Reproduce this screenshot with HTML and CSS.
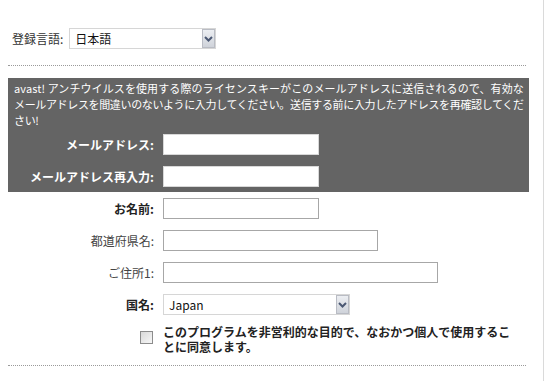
FILE: index.html
```html
<!DOCTYPE html>
<html lang="ja">
<head>
<meta charset="utf-8">
<title>登録</title>
<link rel="stylesheet" href="styles.css">
</head>
<body>
<div class="page">
  <div class="lang-row">
    <label class="lang-label">登録言語:</label>
    <div class="select-wrap lang-select">
      <select class="select"><option>日本語</option></select>
      <span class="select-btn"><svg width="9" height="6" viewBox="0 0 9 6"><polyline points="1,1 4.5,4.5 8,1" fill="none" stroke="#4b5873" stroke-width="2"/></svg></span>
    </div>
  </div>
  <div class="divider"></div>
  <div class="notice">
    <p class="notice-text"><span class="line-wide">avast! アンチウイルスを使用する際のライセンスキーがこのメールアドレスに送信されるので、有効な</span><br>メールアドレスを間違いのないように入力してください。送信する前に入力したアドレスを再確認してくだ<br>さい!</p>
    <div class="form-grid">
      <label class="label strong">メールアドレス:</label>
      <input class="field field-notice w-short" type="text">
      <label class="label strong">メールアドレス再入力:</label>
      <input class="field field-notice w-short" type="text">
    </div>
  </div>
  <div class="form-grid plain">
    <label class="label strong">お名前:</label>
    <input class="field w-short" type="text">
    <label class="label">都道府県名:</label>
    <input class="field w-mid" type="text">
    <label class="label">ご住所1:</label>
    <input class="field w-long" type="text">
    <label class="label strong">国名:</label>
    <div class="select-wrap country-select">
      <select class="select"><option>Japan</option></select>
      <span class="select-btn"><svg width="9" height="6" viewBox="0 0 9 6"><polyline points="1,1 4.5,4.5 8,1" fill="none" stroke="#4b5873" stroke-width="2"/></svg></span>
    </div>
  </div>
  <div class="agree">
    <span class="checkbox"></span>
    <span class="agree-text">このプログラムを非営利的な目的で、なおかつ個人で使用することに同意します。</span>
  </div>
  <div class="divider bottom"></div>
</div>
</body>
</html>
```
FILE: styles.css
```css
html, body {
  margin: 0;
  padding: 0;
  background: #fff;
}
body {
  font-family: "Noto Sans CJK JP", "Noto Sans", sans-serif;
  font-size: 12px;
  color: #333;
}
.page {
  width: 544px;
  min-height: 381px;
  box-sizing: border-box;
  border-right: 1px solid #dadada;
  padding: 28px 0 0 8px;
}
.lang-row {
  display: flex;
  align-items: center;
  gap: 6px;
  padding-left: 4px;
  height: 21px;
}
.lang-label {
  color: #333;
  line-height: 21px;
}
.select-wrap {
  position: relative;
  height: 21px;
}
.lang-select { width: 147px; }
.country-select { width: 187px; }
.select {
  -webkit-appearance: none;
  appearance: none;
  width: 100%;
  height: 100%;
  box-sizing: border-box;
  border: 1px solid #d6d6d6;
  border-radius: 0;
  background: #fff;
  font-family: "Noto Sans CJK JP", "Noto Sans", sans-serif;
  font-size: 12px;
  color: #111;
  padding: 0 0 0 5px;
  margin: 0;
}
.select-btn {
  position: absolute;
  top: 1px;
  right: 1px;
  bottom: 1px;
  width: 13px;
  box-sizing: border-box;
  border: 1px solid #b9bcc4;
  background: linear-gradient(#eceef2, #cfd3da);
  display: flex;
  align-items: center;
  justify-content: center;
}
.divider {
  margin-top: 16px;
  width: 518px;
  border-top: 1px dotted #9a9a9a;
}
.divider.bottom {
  margin-top: 11px;
}
.notice {
  margin-top: 12px;
  width: 521px;
  background: #646464;
  color: #fff;
  padding: 2px 0 5px 0;
  box-sizing: border-box;
}
.notice-text {
  margin: 0 0 6px 0;
  padding-left: 6px;
  font-size: 11px;
  line-height: 16px;
  letter-spacing: -0.35px;
  white-space: nowrap;
}
.line-wide {
  letter-spacing: 0.1px;
}
.form-grid {
  display: grid;
  grid-template-columns: 146px auto;
  column-gap: 9px;
  row-gap: 11px;
  align-items: center;
  justify-items: start;
}
.form-grid.plain {
  margin-top: 6px;
}
.label {
  justify-self: end;
  text-align: right;
  white-space: nowrap;
  line-height: 21px;
  color: #444;
}
.label.strong {
  font-weight: bold;
  color: #222;
}
.notice .label.strong {
  color: #fff;
}
.field {
  height: 21px;
  box-sizing: border-box;
  border: 1px solid #a7a7a7;
  background: #fff;
  margin: 0;
  padding: 0 3px;
  font-family: inherit;
  font-size: 12px;
}
.field-notice {
  border-color: #d8d8d8;
}
.w-short { width: 156px; }
.w-mid { width: 215px; }
.w-long { width: 275px; }
.agree {
  display: flex;
  align-items: flex-start;
  gap: 10px;
  margin-top: 9px;
  padding-left: 132px;
}
.checkbox {
  flex: none;
  width: 13px;
  height: 13px;
  box-sizing: border-box;
  margin-top: 7px;
  border: 1px solid #8c8c8c;
  background: linear-gradient(135deg, #d9d9d9, #f7f7f7);
}
.agree-text {
  width: 356px;
  font-weight: bold;
  color: #222;
  line-height: 15px;
}
```
